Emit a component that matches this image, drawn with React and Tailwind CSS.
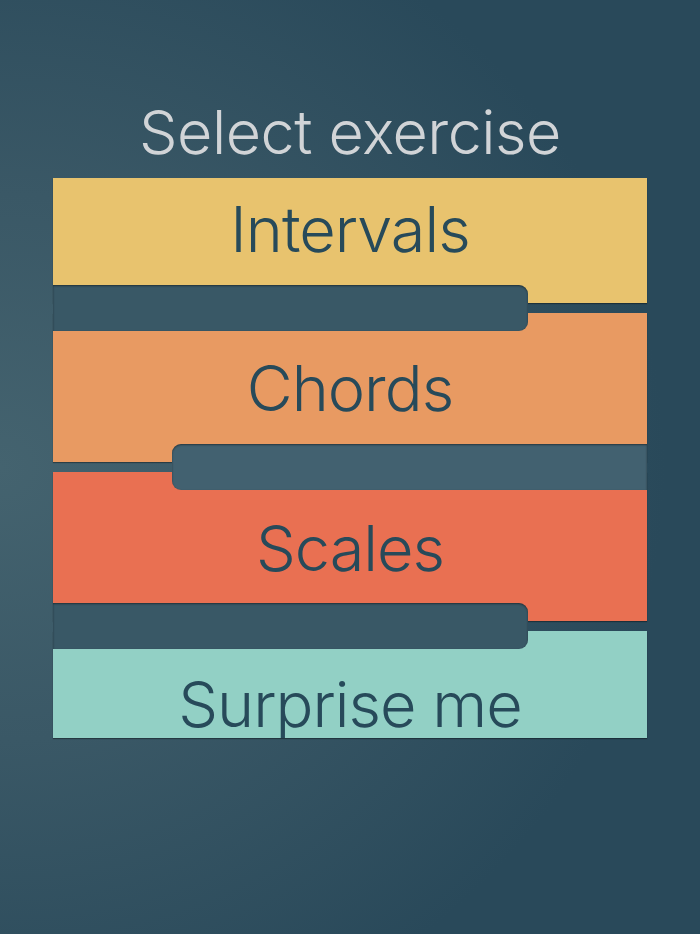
import React from 'react';

const items = [
  { label: 'Intervals', bg: 'bg-[#e8c36e]', h: 'h-[125px]', pt: 'pt-[16px]' },
  { label: 'Chords', bg: 'bg-[#e89a62]', h: 'h-[149px]', pt: 'pt-[40px]' },
  { label: 'Scales', bg: 'bg-[#e97052]', h: 'h-[149px]', pt: 'pt-[41px]' },
  { label: 'Surprise me', bg: 'bg-[#92d0c5]', h: 'h-[107px]', pt: 'pt-[38px]' },
];

export default function App() {
  return (
    <div
      className="w-[700px] h-[934px] overflow-hidden bg-[radial-gradient(ellipse_95%_65%_at_0%_50%,#44636f_0%,#3a5866_45%,#29495a_100%)]"
      style={{ fontFamily: 'Inter, "Noto Sans", sans-serif' }}
    >
      <h1 className="pt-[92px] text-center text-[61px] leading-[80px] font-light tracking-[-0.5px] text-[#d1d4d7]">
        Select exercise
      </h1>

      <div className="relative mx-auto mt-[6px] w-[594px] flex flex-col gap-[10px]">
        {items.map((it) => (
          <button
            key={it.label}
            className={`${it.bg} ${it.h} ${it.pt} overflow-hidden flex justify-center shadow-[0_1px_1px_rgba(0,0,0,0.35)]`}
          >
            <span className="text-[63px] leading-[70px] font-light tracking-[-1px] text-[#274a5a]">
              {it.label}
            </span>
          </button>
        ))}

        <div className="absolute left-0 top-[107px] w-[475px] h-[46px] rounded-r-[9px] bg-[#395866] shadow-[inset_0_1px_2px_rgba(0,0,0,0.45)]" />
        <div className="absolute right-0 top-[266px] w-[475px] h-[46px] rounded-l-[9px] bg-[#426170] shadow-[inset_0_1px_2px_rgba(0,0,0,0.45)]" />
        <div className="absolute left-0 top-[425px] w-[475px] h-[46px] rounded-r-[9px] bg-[#395866] shadow-[inset_0_1px_2px_rgba(0,0,0,0.45)]" />
      </div>
    </div>
  );
}
